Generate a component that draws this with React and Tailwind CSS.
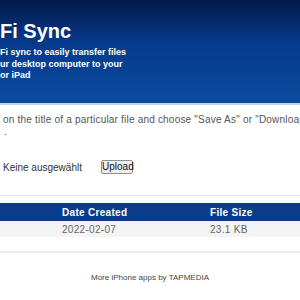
export default function App() {
  return (
    <div className="w-[300px] h-[300px] overflow-hidden bg-white font-['Liberation_Sans',Arial,sans-serif]">
      {/* Header */}
      <div className="h-[103px] bg-linear-to-b from-[#021a4a] via-[#07398a] via-40% to-[#0b4b9e] pt-[19px] text-white">
        <h1 className="text-[20px] leading-[24px] font-bold whitespace-nowrap">Fi Sync</h1>
        <p className="mt-[4px] text-[9px] leading-[11.5px] font-bold whitespace-nowrap">
          Fi sync to easily transfer files
          <br />
          ur desktop computer to your
          <br />
          or iPad
        </p>
      </div>
      <div className="h-[2px] bg-[#c9d2de]" />

      {/* Instructions */}
      <div className="mt-[9px] pl-[3px] text-[10px] leading-[12px] text-[#555] tracking-[0.2px] whitespace-nowrap">
        on the title of a particular file and choose "Save As" or "Download Linked File"
        <br />
        <span className="pl-[1px]">.</span>
      </div>

      {/* Upload form */}
      <div className="mt-[22px] flex items-center pl-[3px] h-[14px]">
        <span className="text-[10px] text-[#333] w-[98px]">Keine ausgewählt</span>
        <button className="h-[14px] w-[32px] border border-[#8f8f8f] rounded-[2px] bg-[#efefef] text-[10px] leading-[12px] text-[#111]">
          Upload
        </button>
      </div>

      {/* File table */}
      <div className="mt-[21px] border-t border-[#e6e6e6] pt-[7px]">
        <div className="h-[18px] bg-[#0a3c8c] flex items-center text-white text-[10px] font-bold tracking-[0.3px]">
          <div className="w-[62px]" />
          <div className="w-[148px]">Date Created</div>
          <div>File Size</div>
        </div>
        <div className="h-[16px] bg-[#f4f4f4] flex items-center text-[#666] text-[10px] tracking-[0.3px]">
          <div className="w-[62px]" />
          <div className="w-[148px]">2022-02-07</div>
          <div>23.1 KB</div>
        </div>
      </div>
      <div className="mt-[14px] h-[2px] bg-[#ececec]" />

      {/* Footer */}
      <div className="mt-[20px] text-center text-[8px] leading-[10px] text-[#444]">
        More iPhone apps by TAPMEDIA
      </div>
    </div>
  )
}
